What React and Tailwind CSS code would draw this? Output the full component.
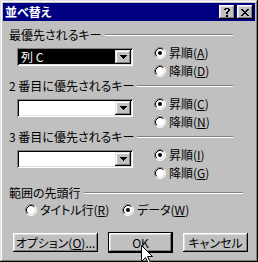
import React from "react";

const jp = "font-['MS_UI_Gothic','Noto_Sans_CJK_JP',sans-serif] [font-feature-settings:'palt']";

const Radio = ({ checked }) => (
  <svg width="12" height="12" viewBox="0 0 12 12" className="shrink-0">
    <circle cx="6" cy="6" r="5" fill="#fff" />
    <path d="M2.11 9.89A5.5 5.5 0 0 1 9.89 2.11" fill="none" stroke="#808080" />
    <path d="M9.89 2.11A5.5 5.5 0 0 1 2.11 9.89" fill="none" stroke="#fff" />
    <path d="M2.82 9.18A4.5 4.5 0 0 1 9.18 2.82" fill="none" stroke="#000" />
    <path d="M9.18 2.82A4.5 4.5 0 0 1 2.82 9.18" fill="none" stroke="#dfdfdf" />
    {checked && <circle cx="6" cy="6" r="2" fill="#000" />}
  </svg>
);

const RadioItem = ({ checked, label, hot, className = "" }) => (
  <div className={`flex items-center h-[18px] gap-[3px] ${className}`}>
    <Radio checked={checked} />
    <span className="text-[12px] leading-[12px] text-black whitespace-nowrap">
      {label}(<u>{hot}</u>)
    </span>
  </div>
);

const Header = ({ title, width }) => (
  <div className="flex items-center h-[12px]" style={{ width }}>
    <span className="text-[12px] leading-[12px] text-black whitespace-nowrap">{title}</span>
    <div className="flex-1 ml-[3px] h-[2px] border-t border-b border-t-[#808080] border-b-white" />
  </div>
);

const Combo = ({ value }) => (
  <div className="mt-[4px] ml-[8px] w-[116px] h-[18px] bg-white p-[2px] flex shadow-[inset_1px_1px_#808080,inset_-1px_-1px_#fff,inset_2px_2px_#000,inset_-2px_-2px_#dfdfdf]">
    <div className={`flex-1 flex items-center ${value ? "bg-black" : ""}`}>
      {value && (
        <span className="ml-[2px] text-[12px] leading-[12px] text-white">{value}</span>
      )}
    </div>
    <div className="w-[16px] h-[14px] bg-[#c0c0c0] flex items-center justify-center shadow-[inset_-1px_-1px_#000,inset_1px_1px_#dfdfdf,inset_-2px_-2px_#808080,inset_2px_2px_#fff]">
      <svg width="7" height="4" viewBox="0 0 7 4">
        <path d="M0 0h7v1H0zM1 1h5v1H1zM2 2h3v1H2zM3 3h1v1H3z" fill="#000" />
      </svg>
    </div>
  </div>
);

const SortGroup = ({ title, value, asc, desc, className }) => (
  <div className={className}>
    <Header title={title} width="224px" />
    <div className="flex mt-[3px]">
      <Combo value={value} />
      <div className="ml-[21px] flex flex-col">
        <RadioItem checked label="昇順" hot={asc} />
        <RadioItem label="降順" hot={desc} />
      </div>
    </div>
  </div>
);

const raised =
  "bg-[#c0c0c0] shadow-[inset_-1px_-1px_#000,inset_1px_1px_#fff,inset_-2px_-2px_#808080,inset_2px_2px_#dfdfdf]";

export default function App() {
  return (
    <div
      className={`w-[258px] h-[262px] bg-[#c0c0c0] p-[3px] flex flex-col relative overflow-hidden ${jp} shadow-[inset_-1px_-1px_#000,inset_1px_1px_#dfdfdf,inset_-2px_-2px_#808080,inset_2px_2px_#fff]`}
    >
      <div className="h-[18px] bg-[#000080] flex items-center pl-[2px] pr-[2px]">
        <span className="flex-1 text-white text-[12px] leading-[12px] font-bold">並べ替え</span>
        <button className={`w-[16px] h-[14px] flex items-center justify-center ${raised}`}>
          <svg width="6" height="9" viewBox="0 0 6 9">
            <path d="M1 0h4v1H1zM0 1h2v1H0zM4 1h2v2H4zM3 3h2v1H3zM2 4h2v2H2zM2 7h2v2H2z" fill="#000" />
          </svg>
        </button>
        <button className={`ml-[2px] w-[16px] h-[14px] flex items-center justify-center ${raised}`}>
          <svg width="8" height="7" viewBox="0 0 8 7">
            <path d="M0 0h2v1H0zM6 0h2v1H6zM1 1h2v1H1zM5 1h2v1H5zM2 2h4v1H2zM3 3h2v1H3zM2 4h4v1H2zM1 5h2v1H1zM5 5h2v1H5zM0 6h2v1H0zM6 6h2v1H6z" fill="#000" />
          </svg>
        </button>
      </div>

      <div className="pl-[6px] flex flex-col">
        <SortGroup className="mt-[8px]" title="最優先されるキー" value="列 C" asc="A" desc="D" />
        <SortGroup title="2 番目に優先されるキー" asc="C" desc="N" />
        <SortGroup title="3 番目に優先されるキー" asc="I" desc="G" />

        <div className="mt-[5px]">
          <Header title="範囲の先頭行" width="234px" />
          <div className="flex mt-[2px] pl-[16px]">
            <RadioItem className="w-[97px]" label="タイトル行" hot="R" />
            <RadioItem checked label="データ" hot="W" />
          </div>
        </div>

        <div className="flex items-center mt-[13px] h-[21px] text-[12px] leading-[12px] text-black">
          <button className={`ml-[4px] w-[85px] h-[19px] flex items-center justify-center ${raised}`}>
            オプション(<u>O</u>)...
          </button>
          <button className="ml-[10px] w-[65px] h-[21px] flex items-center justify-center bg-[#c0c0c0] shadow-[inset_0_0_0_1px_#000,inset_-2px_-2px_#000,inset_2px_2px_#fff,inset_-3px_-3px_#808080,inset_3px_3px_#dfdfdf]">
            OK
          </button>
          <button className={`ml-[10px] w-[65px] h-[19px] flex items-center justify-center ${raised}`}>
            キャンセル
          </button>
        </div>
      </div>

      <svg className="absolute left-[141px] top-[245px]" width="12" height="19" viewBox="0 0 12 19">
        <path d="M0.5 0.5V16.5L4.5 12.5L7.5 18.5L9.5 17.5L6.5 11.5H11.5Z" fill="#fff" stroke="#000" strokeLinejoin="miter" />
      </svg>
    </div>
  );
}
